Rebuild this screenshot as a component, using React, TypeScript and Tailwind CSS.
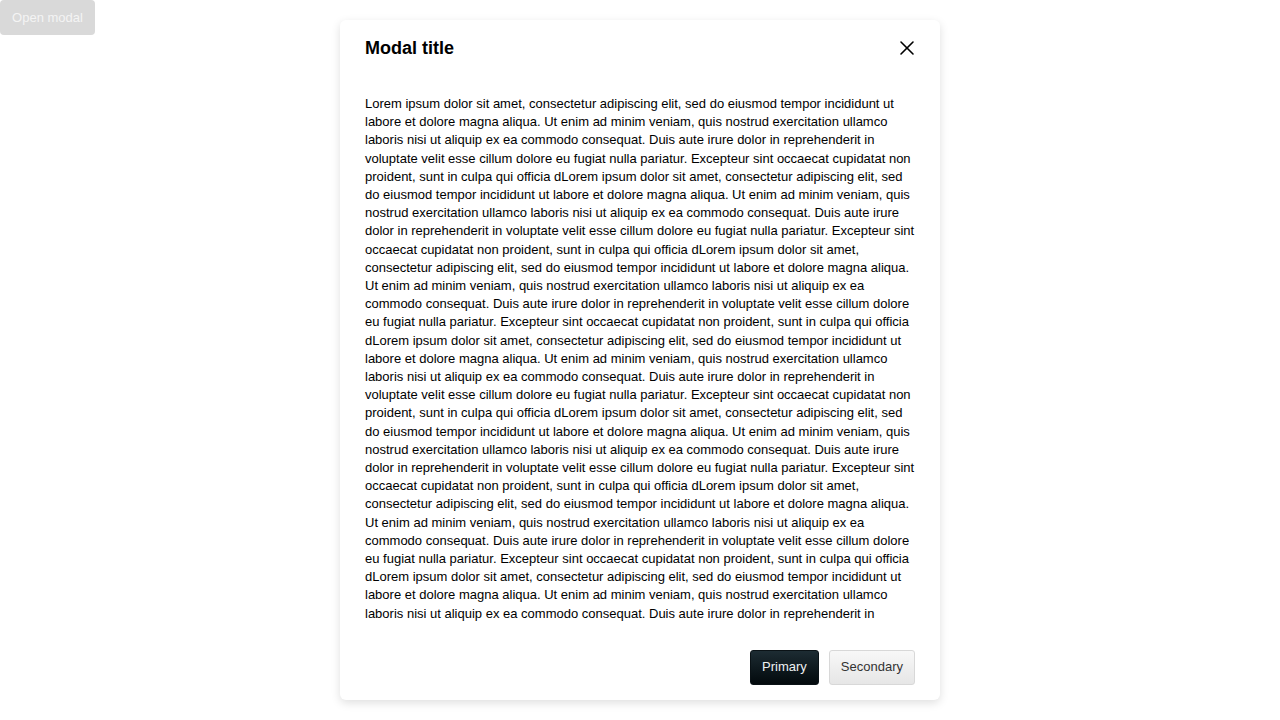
import { X } from "lucide-react";

const LOREM =
  "Lorem ipsum dolor sit amet, consectetur adipiscing elit, sed do eiusmod tempor incididunt ut labore et dolore magna aliqua. Ut enim ad minim veniam, quis nostrud exercitation ullamco laboris nisi ut aliquip ex ea commodo consequat. Duis aute irure dolor in reprehenderit in voluptate velit esse cillum dolore eu fugiat nulla pariatur. Excepteur sint occaecat cupidatat non proident, sunt in culpa qui officia d";

export default function App() {
  const body = Array(8).fill(LOREM).join("");

  return (
    <div className="relative h-[720px] w-full bg-white font-['Liberation_Sans',Arial,sans-serif] text-black">
      {/* Trigger */}
      <button className="absolute left-0 top-0 h-[35px] w-[95px] rounded-[4px] bg-[#d9d9d9] text-[13px] text-[#f4f4f4]">
        Open modal
      </button>

      {/* Modal */}
      <div className="mx-auto flex h-[680px] w-[600px] translate-y-[20px] flex-col rounded-[6px] bg-white shadow-[0_3px_10px_rgba(0,0,0,0.13)]">
        <header className="flex h-[55px] shrink-0 items-center justify-between px-[25px]">
          <h2 className="text-[18px] font-bold leading-[22px]">Modal title</h2>
          <button className="-mr-[4px] flex h-[24px] w-[24px] items-center justify-center text-black">
            <X size={24} strokeWidth={1.6} />
          </button>
        </header>

        <div className="min-h-0 flex-1 overflow-hidden px-[25px] pt-[20px]">
          <p className="text-[13px] leading-[18.2px]">{body}</p>
        </div>

        <footer className="flex shrink-0 justify-end gap-[10px] px-[25px] pb-[15px] pt-[25px]">
          <button className="h-[35px] rounded-[3px] border border-[#0a1216] bg-gradient-to-b from-[#1d2c33] to-[#040a0d] px-[11px] pb-[1px] text-[13px] text-[#eef1f2]">
            Primary
          </button>
          <button className="h-[35px] rounded-[3px] border border-[#d8d8d8] bg-gradient-to-b from-[#f8f8f8] to-[#e6e6e6] px-[11px] pb-[1px] text-[13px] text-[#333]">
            Secondary
          </button>
        </footer>
      </div>
    </div>
  );
}
